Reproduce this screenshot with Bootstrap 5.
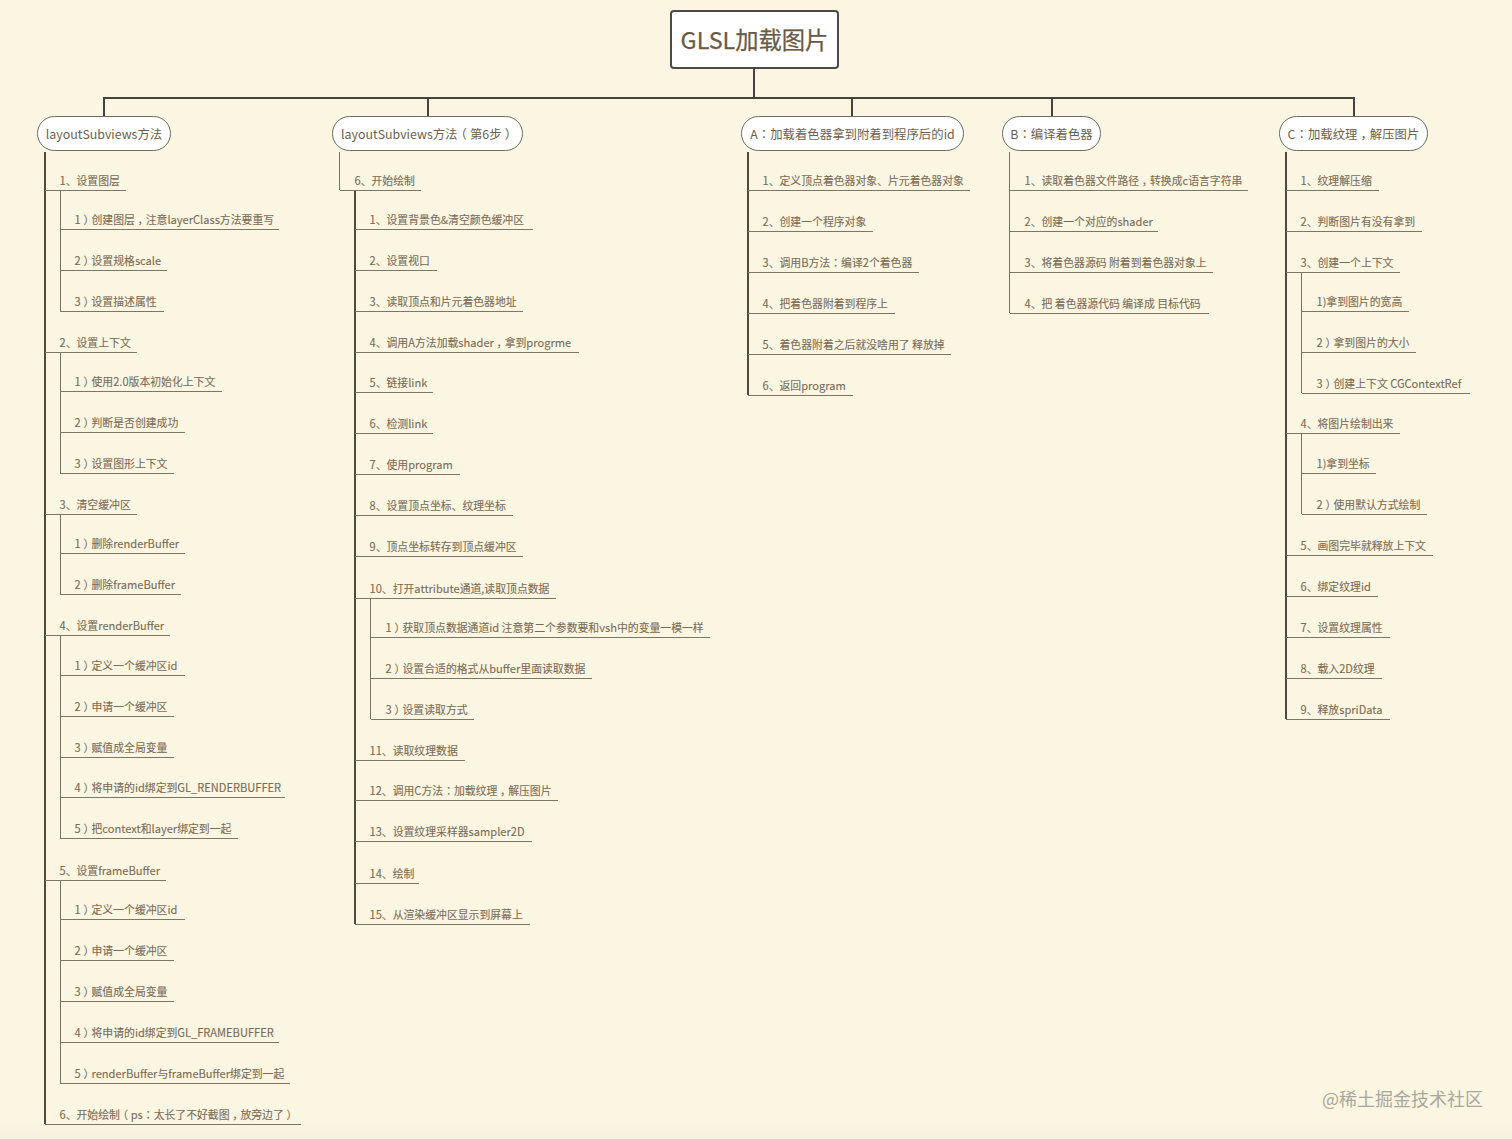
<!DOCTYPE html>
<html lang="zh-CN">
<head>
<meta charset="utf-8">
<title>GLSL加载图片</title>
<link href="https://cdn.jsdelivr.net/npm/bootstrap@5.3.0/dist/css/bootstrap.min.css" rel="stylesheet">
<style>
html,body{height:100%}
body{margin:0;background:linear-gradient(180deg,#fbf6e2 0,#fbf6e2 1118px,#f5f1e0 1139px);overflow:hidden;
  font-family:"Noto Sans CJK SC","Noto Sans",sans-serif;color:#7a6b55}
.canvas-map{position:relative;width:1512px;height:1139px}
.root-node,.topic,.leaf,.wire,.mark-water{position:absolute}
.root-node{left:670px;top:10px;width:169px;height:59px;background:#fff;border:2px solid #4c4a45;border-radius:4px;
  font-size:23.3px;color:#6a5a45;-webkit-text-stroke:.25px #6a5a45}
.topic{height:35px;padding-top:2px;background:#fff;border:1px solid #6f6a60;font-size:12.4px;color:#6d5f4b;white-space:nowrap}
.leaf{height:22px;border-bottom:1px solid #7d7664;font-size:10.85px;line-height:22px;white-space:nowrap;color:#7a6b55;-webkit-text-stroke:.1px #7a6b55}
.lat{font-size:11.1px}
.wire{background:#4d4a44}
.wire-main{background:#45433e}
.wire-sub{background:#77705f}
.pc,.pk{display:inline-block}
.pc{font-feature-settings:"halt";padding:0 .25em}
.pk{font-family:"Noto Sans CJK TC",sans-serif}
.mark-water{left:1322px;top:1085px;font-size:18px;line-height:26px;color:#aaa79b;white-space:nowrap}
</style>
</head>
<body>
<div class="canvas-map" id="map">
  <div class="root-node d-flex align-items-center justify-content-center">GLSL加载图片</div>
  <div class="mark-water">@稀土掘金技术社区</div>
</div>
<script>
const map=document.getElementById('map');
function add(cls,css,html){const d=document.createElement('div');d.className=cls;Object.assign(d.style,css);if(html)d.innerHTML=html;map.appendChild(d);return d;}
function px(v){return v+'px';}
function hw(x1,x2,y,c){add('wire '+c,{left:px(x1),top:px(y),width:px(x2-x1),height:'2px'});}
function vw(x,y1,y2,c,w){add('wire '+c,{left:px(x),top:px(y1),width:px(w||2),height:px(y2-y1)});}
const punct=s=>s.replace(/[，（）]/g,m=>'<span class="pc">'+m+'</span>').replace(/：/g,'<span class="pk">：</span>');
const latin=s=>s.replace(/[A-Za-z0-9_]+/g,m=>'<span class="lat">'+m+'</span>');
/* trunk */
vw(753,68,98,'wire-main');
hw(103,1355,97,'wire-main');
[[103],[427],[851],[1051],[1353]].forEach(a=>vw(a[0],98,116,'wire-main'));
/* topics: left,width,text */
[[37,134,'layoutSubviews方法'],[332,191,'layoutSubviews方法（第6步）'],[741,223,'A：加载着色器拿到附着到程序后的id'],[1002,99,'B：编译着色器'],[1279,149,'C：加载纹理，解压图片']]
.forEach(t=>add('topic rounded-pill d-flex align-items-center justify-content-center',{left:px(t[0]),top:'116px',width:px(t[1])},punct(t[2])));
/* leaves: x (line start), underline y, line end, text */
function leaves(x,rows){rows.forEach(r=>add('leaf',{left:px(x),top:px(r[0]-21),width:px(r[1]-x),paddingLeft:px(14.5)},punct(latin(r[2]))));}
/* column 1 */
vw(44,152,1124,'wire');
leaves(45,[[190,126,'1、设置图层'],[352,137,'2、设置上下文'],[514,137,'3、清空缓冲区'],[635,170,'4、设置renderBuffer'],[880,166,'5、设置frameBuffer'],[1124,301,'6、开始绘制（ps：太长了不好截图，放旁边了）']]);
vw(60,191,311,'wire-sub',1);
leaves(60,[[229,279,'1）创建图层，注意layerClass方法要重写'],[270,167,'2）设置规格scale'],[311,164,'3）设置描述属性']]);
vw(60,353,473,'wire-sub',1);
leaves(60,[[391,222,'1）使用2.0版本初始化上下文'],[432,185,'2）判断是否创建成功'],[473,174,'3）设置图形上下文']]);
vw(60,515,594,'wire-sub',1);
leaves(60,[[553,185,'1）删除renderBuffer'],[594,181,'2）删除frameBuffer']]);
vw(60,636,838,'wire-sub',1);
leaves(60,[[675,185,'1）定义一个缓冲区id'],[716,174,'2）申请一个缓冲区'],[757,174,'3）赋值成全局变量'],[797,285,'4）将申请的id绑定到GL_RENDERBUFFER'],[838,238,'5）把context和layer绑定到一起']]);
vw(60,881,1083,'wire-sub',1);
leaves(60,[[919,185,'1）定义一个缓冲区id'],[960,174,'2）申请一个缓冲区'],[1001,174,'3）赋值成全局变量'],[1042,279,'4）将申请的id绑定到GL_FRAMEBUFFER'],[1083,290,'5）renderBuffer与frameBuffer绑定到一起']]);
/* column 2 */
vw(339,152,190,'wire-sub',1);
leaves(340,[[190,421,'6、开始绘制']]);
vw(354,191,924,'wire');
leaves(355,[[229,533,'1、设置背景色&清空颜色缓冲区'],[270,437,'2、设置视口'],[311,523,'3、读取顶点和片元着色器地址'],[352,579,'4、调用A方法加载shader，拿到progrme'],[392,433,'5、链接link'],[433,433,'6、检测link'],[474,460,'7、使用program'],[515,513,'8、设置顶点坐标、纹理坐标'],[556,523,'9、顶点坐标转存到顶点缓冲区'],[598,556,'10、打开attribute通道,读取顶点数据'],[760,465,'11、读取纹理数据'],[800,558,'12、调用C方法：加载纹理，解压图片'],[841,532,'13、设置纹理采样器sampler2D'],[883,419,'14、绘制'],[924,530,'15、从渲染缓冲区显示到屏幕上']]);
vw(370,599,719,'wire-sub',1);
leaves(371,[[637,710,'1）获取顶点数据通道id 注意第二个参数要和vsh中的变量一模一样'],[678,592,'2）设置合适的格式从buffer里面读取数据'],[719,474,'3）设置读取方式']]);
/* column A */
vw(747,152,395,'wire');
leaves(748,[[190,970,'1、定义顶点着色器对象、片元着色器对象'],[231,873,'2、创建一个程序对象'],[272,919,'3、调用B方法：编译2个着色器'],[313,895,'4、把着色器附着到程序上'],[354,951,'5、着色器附着之后就没啥用了 释放掉'],[395,853,'6、返回program']]);
/* column B */
vw(1009,152,313,'wire-sub',1);
leaves(1010,[[190,1248,'1、读取着色器文件路径，转换成c语言字符串'],[231,1158,'2、创建一个对应的shader'],[272,1213,'3、将着色器源码 附着到着色器对象上'],[313,1209,'4、把 着色器源代码 编译成 目标代码']]);
/* column C */
vw(1285,152,719,'wire');
leaves(1286,[[190,1379,'1、纹理解压缩'],[231,1422,'2、判断图片有没有拿到'],[272,1400,'3、创建一个上下文'],[433,1400,'4、将图片绘制出来'],[555,1433,'5、画图完毕就释放上下文'],[596,1378,'6、绑定纹理id'],[637,1390,'7、设置纹理属性'],[678,1382,'8、载入2D纹理'],[719,1390,'9、释放spriData']]);
vw(1301,273,393,'wire-sub',1);
leaves(1302,[[311,1409,'1)拿到图片的宽高'],[352,1416,'2）拿到图片的大小'],[393,1470,'3）创建上下文 CGContextRef']]);
vw(1301,434,514,'wire-sub',1);
leaves(1302,[[473,1376,'1)拿到坐标'],[514,1427,'2）使用默认方式绘制']]);
</script>
<script src="https://cdn.jsdelivr.net/npm/bootstrap@5.3.0/dist/js/bootstrap.bundle.min.js"></script>
</body>
</html>
